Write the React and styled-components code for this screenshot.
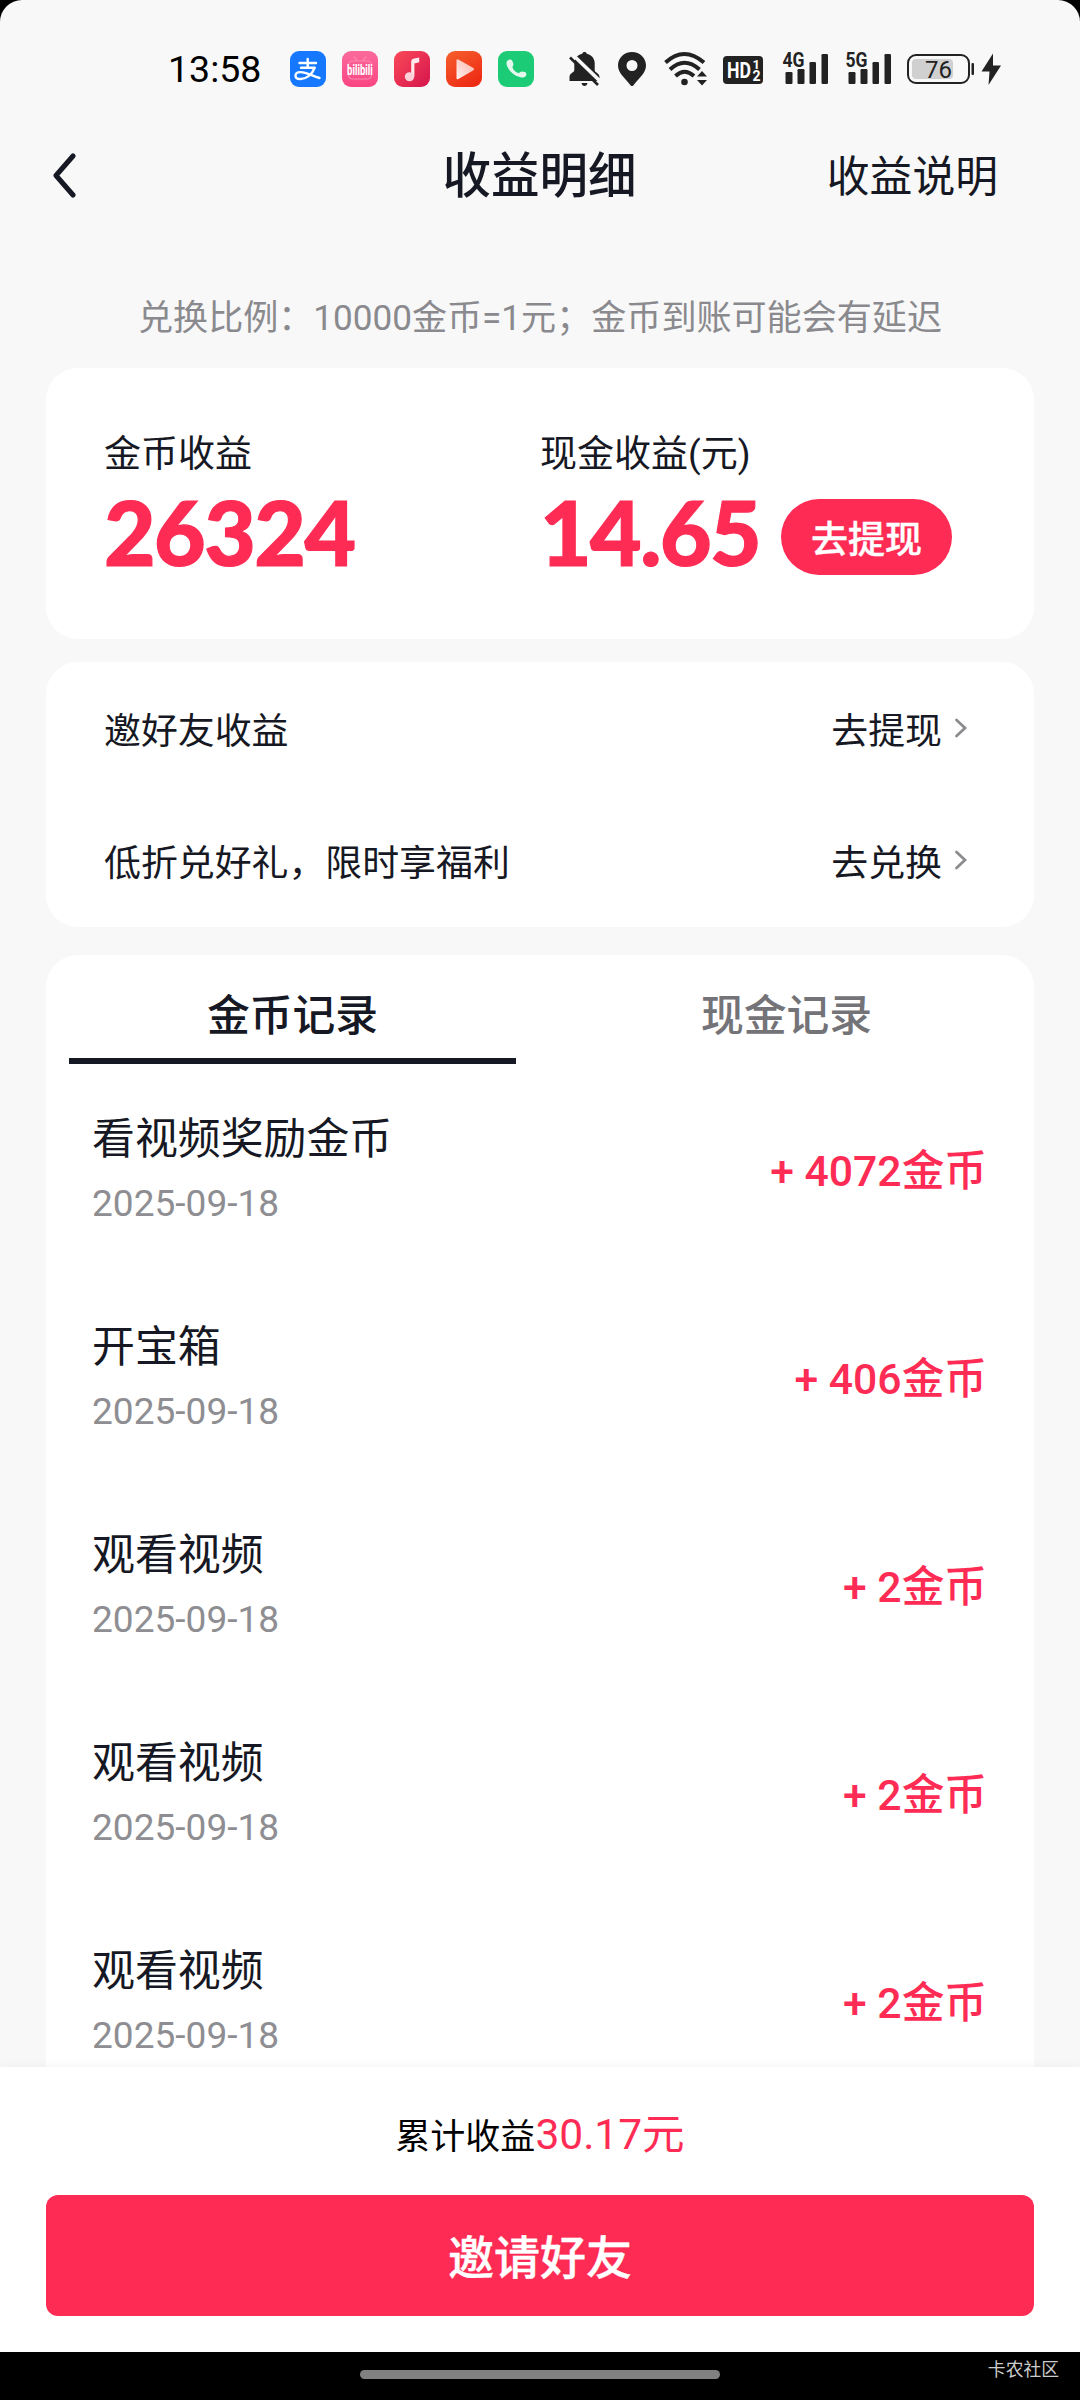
import React, { useState } from 'react';
import styled, { createGlobalStyle } from 'styled-components';

const accounts = [
    { label: '邀好友收益', action: '去提现' },
    { label: '低折兑好礼，限时享福利', action: '去兑换' },
];

const tabs = ['金币记录', '现金记录'];

const records = [
    { id: 1, title: '看视频奖励金币', date: '2025-09-18', amount: 4072 },
    { id: 2, title: '开宝箱', date: '2025-09-18', amount: 406 },
    { id: 3, title: '观看视频', date: '2025-09-18', amount: 2 },
    { id: 4, title: '观看视频', date: '2025-09-18', amount: 2 },
    { id: 5, title: '观看视频', date: '2025-09-18', amount: 2 },
];

function AlipayIcon() {
    return (
        <svg width="36" height="36" viewBox="0 0 36 36">
            <rect width="36" height="36" rx="9" fill="#1677ff" />
            <g fill="none" stroke="#fff" strokeWidth="2.4" strokeLinecap="round">
                <path d="M9.5 12H26M17.7 8v8.5M11 16.7h13.5" />
                <path d="M24.5 17C22 24 16 28 10.5 28c-3.4 0-5-1.5-5-3.3 0-2.2 2-3.6 5-3.6 6 0 11 3.5 19 5.9" />
            </g>
        </svg>
    );
}

function BilibiliIcon() {
    return (
        <svg width="36" height="36" viewBox="0 0 36 36">
            <defs>
                <linearGradient id="bili" x1="0" y1="0" x2="0" y2="1">
                    <stop offset="0" stopColor="#fb6a9c" />
                    <stop offset="1" stopColor="#fb4583" />
                </linearGradient>
            </defs>
            <rect width="36" height="36" rx="9" fill="url(#bili)" />
            <g fill="none" stroke="#fd85ae" strokeWidth="1.2" strokeLinecap="round">
                <rect x="6.5" y="10" width="23" height="18" rx="4" />
                <path d="M12 6l3 3M24 6l-3 3" />
            </g>
            <text
                x="18"
                y="23.5"
                textAnchor="middle"
                fontFamily="Roboto, sans-serif"
                fontWeight="700"
                fontSize="9.5"
                fill="#fff"
                transform="translate(0 -10) scale(1 1.45)"
            >
                bilibili
            </text>
        </svg>
    );
}

function MusicIcon() {
    return (
        <svg width="36" height="36" viewBox="0 0 36 36">
            <defs>
                <linearGradient id="music" x1="0" y1="0" x2="1" y2="1">
                    <stop offset="0" stopColor="#fb4a58" />
                    <stop offset="1" stopColor="#d5144d" />
                </linearGradient>
            </defs>
            <rect width="36" height="36" rx="9" fill="url(#music)" />
            <path d="M17.2 25.5V10.5q0-2.2 2-2.7l6-1.3v4.8l-4.8 1.2v13z" fill="#ffe9ec" />
            <ellipse cx="15.5" cy="25.8" rx="4.7" ry="4.5" fill="#ffd0d8" />
        </svg>
    );
}

function VideoIcon() {
    return (
        <svg width="36" height="36" viewBox="0 0 36 36">
            <defs>
                <linearGradient id="video" x1="0" y1="0" x2="0.6" y2="1">
                    <stop offset="0" stopColor="#f6602c" />
                    <stop offset="1" stopColor="#ee2c16" />
                </linearGradient>
                <linearGradient id="videoPlay" x1="0" y1="1" x2="1" y2="0">
                    <stop offset="0" stopColor="#fff0ee" />
                    <stop offset="1" stopColor="#fdb4a8" />
                </linearGradient>
            </defs>
            <rect width="36" height="36" rx="9" fill="url(#video)" />
            <path
                d="M10.5 9.5v17.5q0 1.9 1.9 1l15-8.7q1.6-1.2 0-2.3l-15-8.5q-1.9-.9-1.9 1z"
                fill="url(#videoPlay)"
            />
        </svg>
    );
}

function PhoneIcon() {
    return (
        <svg width="36" height="36" viewBox="0 0 36 36">
            <rect width="36" height="36" rx="9" fill="#1ccb76" />
            <path
                d="M9.6 9.6c1.8-1.6 4-1.3 4.9.6l.9 2.5c.5 1.6-1.2 2.6-.8 4 .8 2.4 3.2 4.7 5.6 5.3 1.5.3 2-1.6 3.8-1.5l2.8.6c2 .7 2 3 .6 4.5-1.2 1.2-3.4 1.3-5.6.5-6.3-1.9-10.8-6-12.8-11.4-.8-2.1-.8-4 .6-5.1z"
                fill="#e4f9ee"
            />
        </svg>
    );
}

function MutedBell() {
    return (
        <svg width="32" height="36" viewBox="0 0 32 36">
            <path
                d="M15.5 1c1.2 0 2 .7 2.2 1.7 4.8 1 8 4.7 8 9.6V19c0 2.6 4.8 3 4.8 7v4H.5v-4c0-4 4.8-4.4 4.8-7v-6.700c0-4.900 3.200-8.600 8-9.600.2-1 1-1.700 2.200-1.700z"
                fill="#222"
            />
            <path d="M12.5 32h6q-.6 3-3 3t-3-3z" fill="#222" />
            <path d="M3.5 3.500l29 28" stroke="#f8f8f8" strokeWidth="3.6" />
            <path d="M1 6.500l28 27.500" stroke="#222" strokeWidth="2.6" />
        </svg>
    );
}

function Pin() {
    return (
        <svg width="31" height="36" viewBox="0 0 31 36">
            <path
                d="M15 1c8 0 14 6 14 13.5C29 22 22 27 16.3 34.4q-1.3 1.4-2.6 0C8 27 1 22 1 14.5 1 7 7 1 15 1zm0 8a5.500 5.500 0 100 11 5.500 5.500 0 000-11z"
                fill="#222"
            />
        </svg>
    );
}

function Wifi() {
    return (
        <svg width="43" height="36" viewBox="0 0 43 36">
            <g fill="none" stroke="#222" strokeWidth="4">
                <path d="M1.5 11.5q18.500-17 38.500 0" />
                <path d="M6 18.5q14.500-13.500 29.500 0" />
                <path d="M11.5 25q9-8.500 18.500 0" />
            </g>
            <circle cx="20.5" cy="31" r="3.3" fill="#222" />
            <path d="M38 20l5 5.5H33zM38 34.5l5-5.500H33z" fill="#222" />
        </svg>
    );
}

function HdBadge() {
    return (
        <svg width="43" height="36" viewBox="0 0 43 36">
            <rect y="5" width="40" height="28" rx="4" fill="#222" />
            <g fill="#fff" fontFamily="Roboto, sans-serif" fontWeight="700">
                <text x="4" y="27" fontSize="22" textLength="24" lengthAdjust="spacingAndGlyphs">
                    HD
                </text>
                <text x="29.5" y="18" fontSize="13">1</text>
                <text x="29.5" y="30" fontSize="14">2</text>
            </g>
        </svg>
    );
}

function Signal({ type }) {
    return (
        <svg width="46.5" height="44" viewBox="0 -8 46.5 44">
            <g fill="#222">
                <rect x="3.5" y="21" width="7" height="12" rx="1.2" />
                <rect x="15.5" y="18" width="7" height="15" rx="1.2" />
                <rect x="27.5" y="11" width="6.5" height="22" rx="1.2" />
                <rect x="39.5" y="3" width="6.5" height="30" rx="1.2" />
                <text
                    x="0.5"
                    y="16"
                    fontFamily="Roboto, sans-serif"
                    fontWeight="700"
                    fontSize="21"
                    textLength="22"
                    lengthAdjust="spacingAndGlyphs"
                >
                    {type}
                </text>
            </g>
        </svg>
    );
}

function Battery({ level }) {
    return (
        <svg width="94" height="36" viewBox="0 0 94 36">
            <rect x="1" y="4" width="61" height="28" rx="8" fill="none" stroke="#222" strokeWidth="2" />
            <rect x="5" y="8" width={(54 * level) / 100} height="20" rx="4" fill="#d0d0d0" />
            <rect x="64.5" y="12" width="2.5" height="12" rx="1" fill="#222" />
            <text x="18" y="27" fontFamily="Roboto, sans-serif" fontSize="24" fill="#222">
                {level}
            </text>
            <path d="M86 2.5L74.5 20.5h8L81.5 34 94 14.5h-8z" fill="#222" />
        </svg>
    );
}

export default function App() {
    const [currentTab, setCurrentTab] = useState(0);

    return (
        <>
            <GlobalStyle />
            <Screen>
                <StatusBar>
                    <Clock>13:58</Clock>
                    <AppIcons>
                        <AlipayIcon />
                        <BilibiliIcon />
                        <MusicIcon />
                        <VideoIcon />
                        <PhoneIcon />
                    </AppIcons>
                    <SystemIcons>
                        <MutedBell />
                        <Pin />
                        <Wifi />
                        <HdBadge />
                        <Signal type="4G" />
                        <Signal type="5G" />
                        <Battery level={76} />
                    </SystemIcons>
                </StatusBar>
                <Header>
                    <BackButton>
                        <svg width="24" height="46" viewBox="0 0 24 46">
                            <path
                                d="M21 3L4 22.5l17 19.5"
                                fill="none"
                                stroke="#161823"
                                strokeWidth="5"
                                strokeLinecap="round"
                                strokeLinejoin="round"
                            />
                        </svg>
                    </BackButton>
                    <h1>收益明细</h1>
                    <HelpLink>收益说明</HelpLink>
                </Header>
                <Content>
                    <Notice>兑换比例：10000金币=1元；金币到账可能会有延迟</Notice>
                    <Summary>
                        <Balance>
                            <label>金币收益</label>
                            <Amount>26324</Amount>
                        </Balance>
                        <Balance>
                            <label>现金收益(元)</label>
                            <div className="line">
                                <Amount>14.65</Amount>
                                <WithdrawButton>去提现</WithdrawButton>
                            </div>
                        </Balance>
                    </Summary>
                    <Links>
                        {accounts.map((account) => (
                            <LinkRow key={account.label}>
                                <span>{account.label}</span>
                                <div className="action">
                                    {account.action}
                                    <svg width="14" height="22" viewBox="0 0 14 22">
                                        <path
                                            d="M2.5 3l8.500 8-8.500 8"
                                            fill="none"
                                            stroke="#8c8c90"
                                            strokeWidth="2.8"
                                            strokeLinecap="round"
                                        />
                                    </svg>
                                </div>
                            </LinkRow>
                        ))}
                    </Links>
                    <Records>
                        <Tabs>
                            {tabs.map((tab, index) => (
                                <Tab
                                    key={tab}
                                    $active={index === currentTab}
                                    onClick={() => setCurrentTab(index)}
                                >
                                    {tab}
                                </Tab>
                            ))}
                        </Tabs>
                        {records.map((record) => (
                            <Record key={record.id}>
                                <div>
                                    <div className="title">{record.title}</div>
                                    <div className="date">{record.date}</div>
                                </div>
                                <div className="amount">+ {record.amount}金币</div>
                            </Record>
                        ))}
                    </Records>
                </Content>
                <Footer>
                    <Total>
                        累计收益<em>30.17元</em>
                    </Total>
                    <InviteButton>邀请好友</InviteButton>
                </Footer>
                <NavBar>
                    <div className="handle" />
                    <Watermark>卡农社区</Watermark>
                </NavBar>
            </Screen>
        </>
    );
}

const GlobalStyle = createGlobalStyle`
    * {
        box-sizing: border-box;
    }
    body {
        margin: 0;
        background-color: #000;
        color: #161823;
        font-family: Roboto, "Noto Sans CJK SC", sans-serif;
    }
    button {
        border: none;
        padding: 0;
        background: none;
        color: inherit;
        font-family: inherit;
    }
    svg {
        display: block;
        flex-shrink: 0;
    }
`;

const Screen = styled.div`
    display: flex;
    flex-direction: column;
    width: 1080px;
    height: 2400px;
    overflow: hidden;
    border-radius: 22px 22px 0 0;
    background-color: #f8f8f8;
`;

const StatusBar = styled.div`
    display: flex;
    align-items: center;
    height: 138px;
    padding: 0 79px 0 168px;
    color: #000;
`;

const Clock = styled.div`
    width: 122px;
    font-size: 37.5px;
    line-height: 40px;
`;

const AppIcons = styled.div`
    display: flex;
    gap: 16px;
`;

const SystemIcons = styled.div`
    display: flex;
    align-items: flex-end;
    gap: 16px;
    height: 36px;
    margin-left: auto;
`;

const Header = styled.div`
    display: grid;
    grid-template-columns: 200px 1fr 200px;
    align-items: center;
    height: 78px;
    padding: 0 82px 0 52px;
    h1 {
        margin: 0 0 0 29px;
        font-size: 48.5px;
        font-weight: 500;
        line-height: 76px;
        text-align: center;
    }
`;

const BackButton = styled.button`
    justify-self: start;
    padding-bottom: 3px;
`;

const HelpLink = styled.div`
    justify-self: end;
    font-size: 42.8px;
    line-height: 76px;
    white-space: nowrap;
`;

const Content = styled.div`
    flex: 1;
    min-height: 0;
    overflow: hidden;
    padding: 0 46px;
`;

const Notice = styled.div`
    height: 152px;
    padding-top: 77px;
    font-size: 35.1px;
    line-height: 50px;
    text-align: center;
    color: #8a8a8e;
`;

const Card = styled.div`
    border-radius: 32px;
    background-color: #fff;
`;

const Summary = styled(Card)`
    display: grid;
    grid-template-columns: 436px 1fr;
    height: 271px;
    padding: 62px 58px 0;
`;

const Balance = styled.div`
    label {
        display: block;
        font-size: 37px;
        line-height: 50px;
    }
    .line {
        display: flex;
        align-items: center;
        justify-content: space-between;
        width: 412px;
    }
`;

const Amount = styled.div`
    padding-top: 2px;
    color: #fe2c55;
    font-family: Lato, sans-serif;
    font-size: 89px;
    font-weight: 900;
    line-height: 100px;
    letter-spacing: -1.5px;
    -webkit-text-stroke: 1.2px #fe2c55;
`;

const WithdrawButton = styled.button`
    width: 171px;
    height: 76px;
    margin-top: 12px;
    border-radius: 38px;
    background-color: #fe2c55;
    color: #fff;
    font-size: 37px;
    font-weight: 500;
    -webkit-text-stroke: 0.4px #fff;
`;

const Links = styled(Card)`
    margin-top: 23px;
    height: 265px;
    padding: 0 66px 0 58px;
`;

const LinkRow = styled.div`
    display: flex;
    align-items: center;
    justify-content: space-between;
    height: 132px;
    font-size: 36.9px;
    .action {
        display: flex;
        align-items: center;
        gap: 12px;
    }
`;

const Records = styled(Card)`
    margin-top: 28px;
    height: 1300px;
`;

const Tabs = styled.div`
    display: flex;
    height: 109px;
`;

const Tab = styled.div`
    flex: 1;
    margin: 0 24px 0 23px;
    padding-top: 30px;
    border-bottom: 6px solid ${({ $active }) => ($active ? '#161823' : 'transparent')};
    color: ${({ $active }) => ($active ? '#161823' : '#737378')};
    font-size: 42.8px;
    font-weight: 500;
    line-height: 62px;
    text-align: center;
`;

const Record = styled.div`
    display: flex;
    align-items: center;
    justify-content: space-between;
    height: 208px;
    padding: 6px 47px 0 46px;
    .title {
        font-size: 42.9px;
        line-height: 66px;
    }
    .date {
        color: #8e8e92;
        font-size: 37.1px;
        line-height: 64px;
    }
    .amount {
        margin-bottom: 9px;
        color: #fe2c55;
        font-size: 42.7px;
        font-weight: 500;
    }
`;

const Footer = styled.div`
    position: relative;
    height: 285px;
    padding: 33px 46px 0;
    background-color: #fff;
    box-shadow: 0 -2px 10px rgba(0, 0, 0, 0.04);
`;

const Total = styled.div`
    height: 95px;
    font-size: 35px;
    line-height: 69px;
    text-align: center;
    color: #000;
    em {
        color: #fe2c55;
        font-size: 42.5px;
        font-style: normal;
    }
`;

const InviteButton = styled.button`
    display: block;
    width: 100%;
    height: 121px;
    padding-bottom: 3px;
    border-radius: 12px;
    background-color: #fe2c55;
    color: #fff;
    font-size: 46px;
    font-weight: 500;
    -webkit-text-stroke: 0.4px #fff;
`;

const NavBar = styled.div`
    position: relative;
    display: flex;
    justify-content: center;
    height: 48px;
    padding-top: 18px;
    background-color: #000;
    .handle {
        width: 360px;
        height: 9px;
        border-radius: 5px;
        background-color: #808080;
    }
`;

const Watermark = styled.div`
    position: absolute;
    right: 21px;
    top: 5px;
    color: #ccc;
    font-size: 17.8px;
    line-height: 26px;
`;
